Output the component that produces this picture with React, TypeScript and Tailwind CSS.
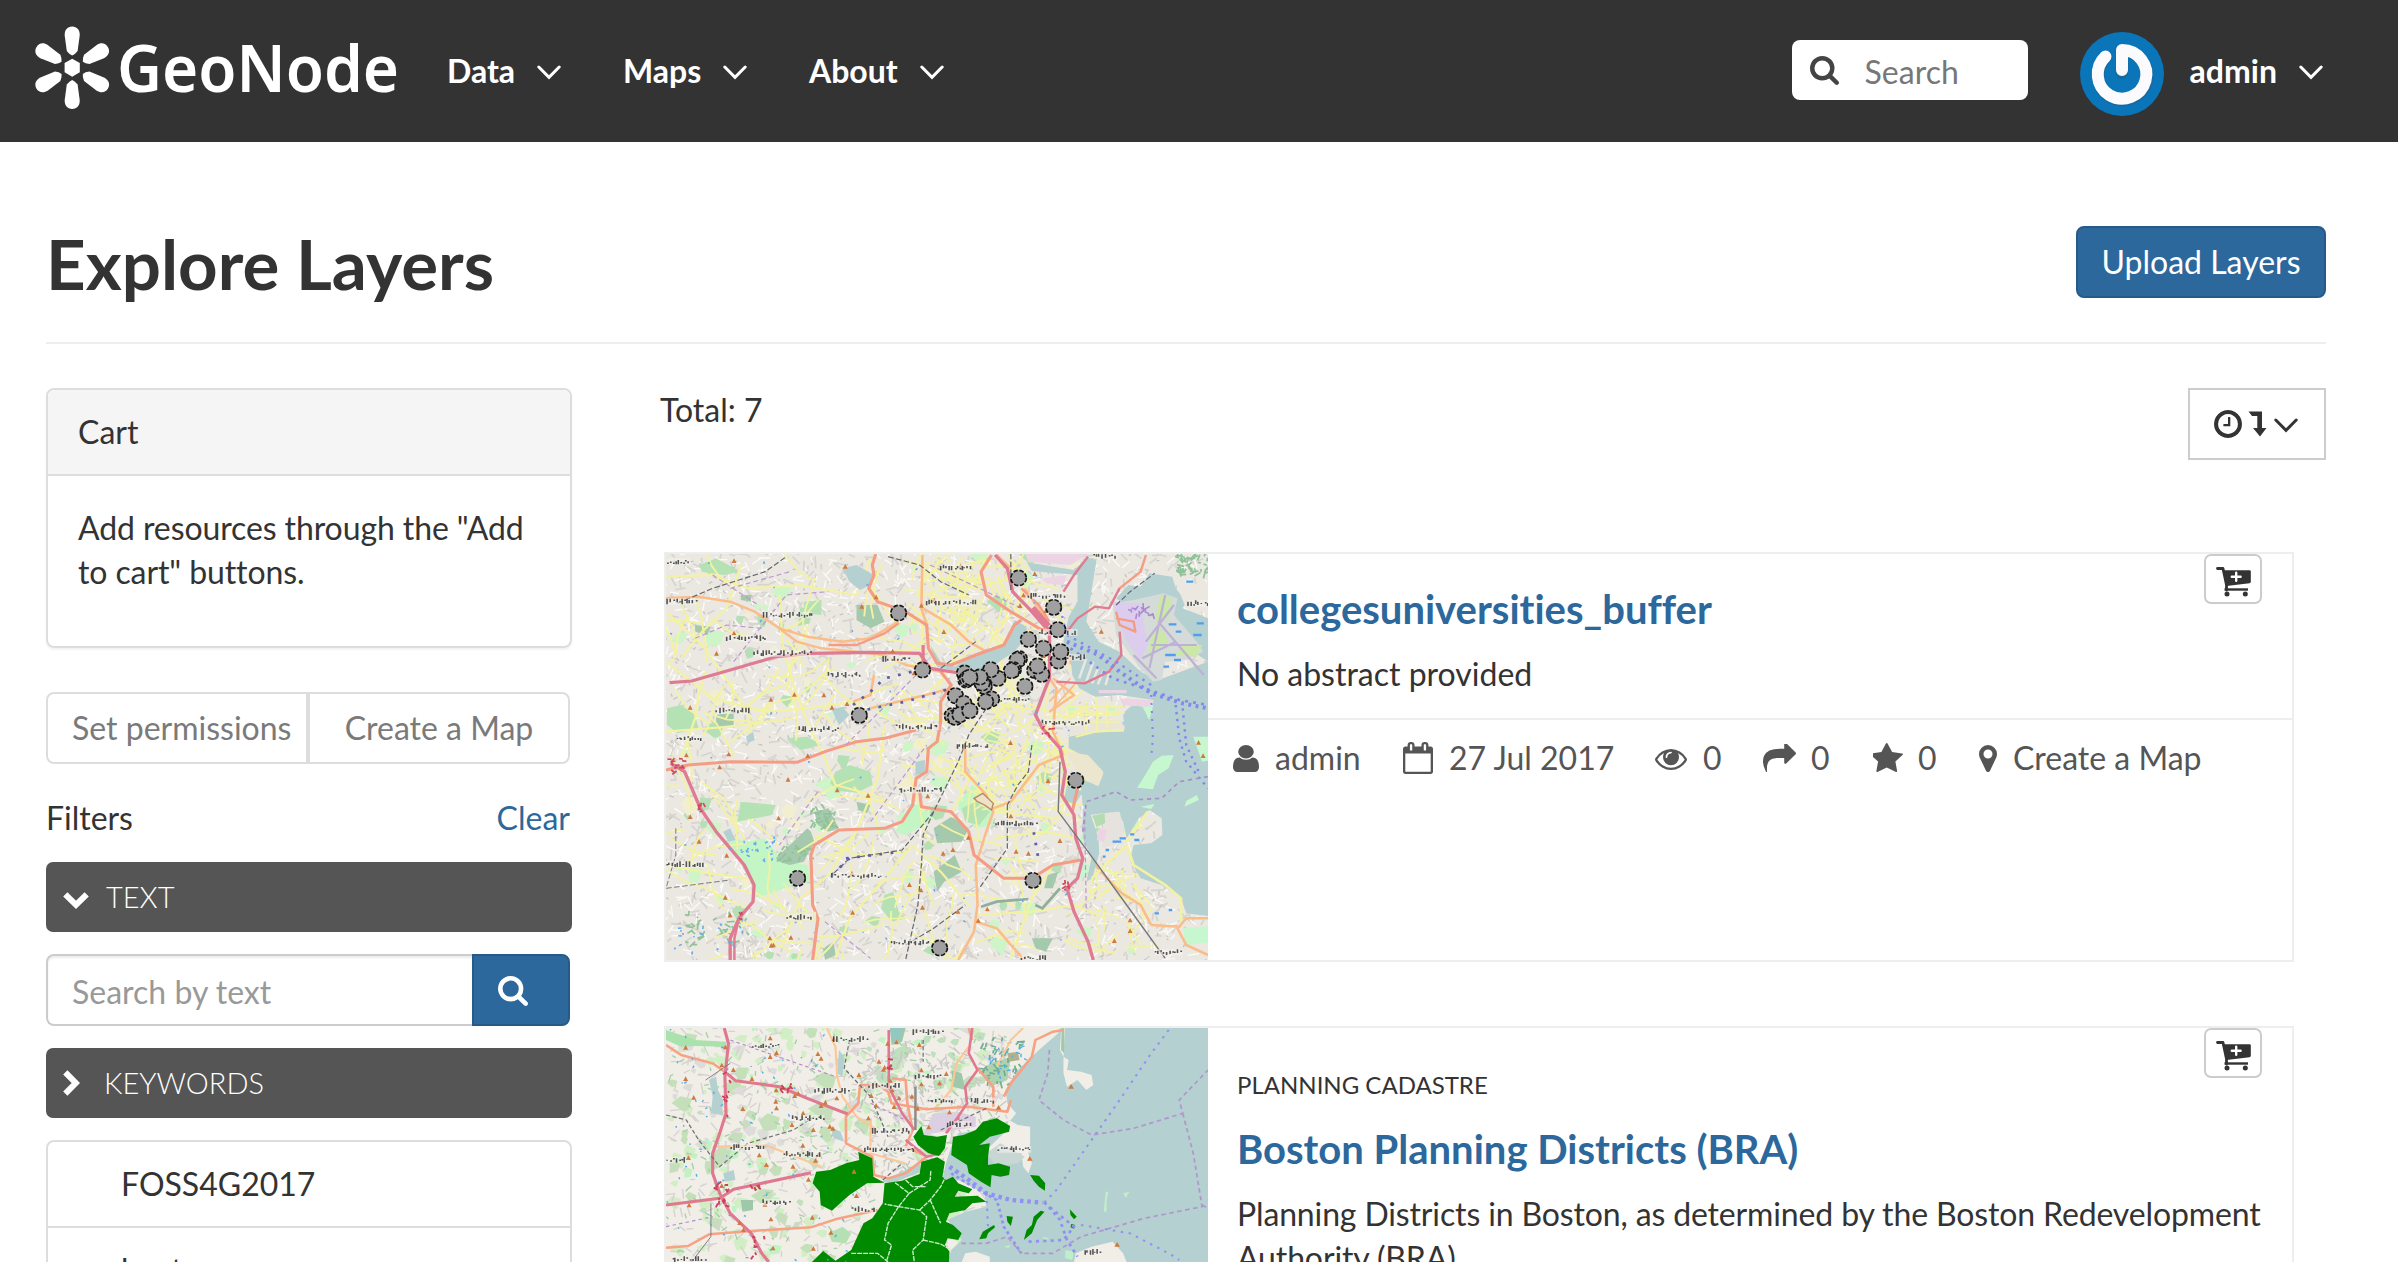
import React from "react";

const FA: Record<string, string> = {
  star: "M1664 615q0 22-26 48l-363 354 86 500q1 7 1 20 0 21-10.5 35.5t-30.5 14.5q-19 0-40-12l-449-236-449 236q-22 12-40 12-21 0-31.5-14.5t-10.5-35.5q0-6 2-20l86-500-364-354q-25-27-25-48 0-37 56-46l502-73 225-455q19-41 49-41t49 41l225 455 502 73q56 9 56 46z",
  share: "M1792 640q0 26-19 45l-512 512q-19 19-45 19t-45-19-19-45v-256h-224q-98 0-175.5 6t-154 21.5-133 42.5-105.5 69.5-80 101-48.5 138.5-17.5 181q0 55 5 123 0 6 2.5 23.5t2.5 26.5q0 15-8.5 25t-23.5 10q-16 0-28-17-7-9-13-22t-13.5-30-10.5-24q-127-285-127-451 0-199 53-333 162-403 875-403h224v-256q0-26 19-45t45-19 45 19l512 512q19 19 19 45z",
  eye: "M1664 960q-152-236-381-353 61 104 61 225 0 185-131.5 316.5t-316.5 131.5-316.5-131.5-131.5-316.5q0-121 61-225-229 117-381 353 133 205 333.5 326.5t434.5 121.5 434.5-121.5 333.5-326.5zm-720-384q0-20-14-34t-34-14q-125 0-214.5 89.5t-89.5 214.5q0 20 14 34t34 14 34-14 14-34q0-86 61-147t147-61q20 0 34-14t14-34zm848 384q0 34-20 69-140 230-376.5 368.5t-499.5 138.5-499.5-139-376.5-368q-20-35-20-69t20-69q140-229 376.5-368t499.5-139 499.5 139 376.5 368q20 35 20 69z",
  marker: "M1152 640q0-106-75-181t-181-75-181 75-75 181 75 181 181 75 181-75 75-181zm256 0q0 109-33 179l-364 774q-16 33-47.5 52t-67.5 19-67.5-19-46.5-52l-365-774q-33-70-33-179 0-212 150-362t362-150 362 150 150 362z",
  user: "M1536 1399q0 109-62.5 187t-150.5 78h-854q-88 0-150.5-78t-62.5-187q0-85 8.5-160.5t31.5-152 58.5-131 94-89 134.5-34.5q131 128 313 128t313-128q76 0 134.5 34.5t94 89 58.5 131 31.5 152 8.5 160.5zm-256-887q0 159-112.5 271.5t-271.5 112.5-271.5-112.5-112.5-271.5 112.5-271.5 271.5-112.5 271.5 112.5 112.5 271.5z",
  calendar: "M192 1664h1408v-1024h-1408v1024zm384-1216v-288q0-14-9-23t-23-9h-64q-14 0-23 9t-9 23v288q0 14 9 23t23 9h64q14 0 23-9t9-23zm768 0v-288q0-14-9-23t-23-9h-64q-14 0-23 9t-9 23v288q0 14 9 23t23 9h64q14 0 23-9t9-23zm384-64v1280q0 52-38 90t-90 38h-1408q-52 0-90-38t-38-90v-1280q0-52 38-90t90-38h128v-96q0-66 47-113t113-47h64q66 0 113 47t47 113v96h384v-96q0-66 47-113t113-47h64q66 0 113 47t47 113v96h128q52 0 90 38t38 90z",
  search: "M1216 832q0-185-131.5-316.5t-316.5-131.5-316.5 131.5-131.5 316.5 131.5 316.5 316.5 131.5 316.5-131.5 131.5-316.5zm512 832q0 52-38 90t-90 38q-54 0-90-38l-343-342q-179 124-399 124-143 0-273.5-55.5t-225-150-150-225-55.5-273.5 55.5-273.5 150-225 225-150 273.5-55.5 273.5 55.5 225 150 150 225 55.5 273.5q0 220-124 399l343 343q37 37 37 90z",
  clock: "M1024 544v448q0 14-9 23t-23 9h-320q-14 0-23-9t-9-23v-64q0-14 9-23t23-9h224v-352q0-14 9-23t23-9h64q14 0 23 9t9 23zm416 352q0-148-73-273t-198-198-273-73-273 73-198 198-73 273 73 273 198 198 273 73 273-73 198-198 73-273zm224 0q0 209-103 385.5t-279.5 279.5-385.5 103-385.5-103-279.5-279.5-103-385.5 103-385.5 279.5-279.5 385.5-103 385.5 103 279.5 279.5 103 385.5z",
};

/* viewBox is the tight box of each glyph, so width and height are ink sizes */
function Icon({ name, box, className }: { name: string; box: string; className: string }) {
  return (
    <svg viewBox={box} preserveAspectRatio="none" fill="currentColor" className={"shrink-0 " + className}>
      <path d={FA[name]} />
    </svg>
  );
}

function Angle({ className = "" }: { className?: string }) {
  return (
    <svg viewBox="0 0 24 15" fill="none" stroke="currentColor" strokeWidth="3" strokeLinecap="round" strokeLinejoin="miter" className={"h-[15px] w-[24px] shrink-0 " + className}>
      <path d="M1.8 2 12 12.3 22.2 2" />
    </svg>
  );
}

function Logo() {
  return (
    <svg viewBox="0 0 380 90" className="h-[90px] w-[380px] shrink-0 overflow-visible" fill="#fff">
      <g transform="translate(-30 -24)">
        {[0, 60, 120, 180, 240, 300].map((a) => (
          <path key={a} transform={`rotate(${a} 72.2 67.8)`} d="M72.200 26.500C77 26.500 80 30 79.700 35.500L77.600 51Q75 54.500 72.200 55.500Q69.400 54.500 66.800 51L64.700 35.500C64.400 30 67.400 26.500 72.200 26.500Z" />
        ))}
        <path d="M72.200 58.700L79.800 63V72.300L72.200 76.800 64.600 72.300V63Z" />
        <text x="117" y="91.500" fontFamily="'Noto Sans','Open Sans',sans-serif" fontWeight="600" fontSize="65" textLength="282" lengthAdjust="spacingAndGlyphs">GeoNode</text>
      </g>
    </svg>
  );
}

function Cart() {
  return (
    <svg viewBox="0 0 35 30" className="h-[30px] w-[35px]">
      <path d="M1.500 1.500H7L10.500 18V23" fill="none" stroke="#333" strokeWidth="2.800" strokeLinecap="round" strokeLinejoin="round" />
      <path d="M6.500 3.200H33.500Q34.800 3.200 34.800 4.500V14.500Q34.800 16 33.500 16.200L10.500 19Z" fill="#333" />
      <path d="M8.500 21.300H32V23.700H8.500Z" fill="#333" />
      <circle cx="11" cy="27" r="2.500" fill="#333" />
      <circle cx="29.300" cy="27" r="2.500" fill="#333" />
      <path d="M20.200 5.800V13.800M15.800 9.800H24.600" stroke="#fff" strokeWidth="2.400" strokeLinecap="round" />
    </svg>
  );
}

function rng(seed: number) {
  let s = seed;
  return () => {
    s = (s * 1664525 + 1013904223) % 4294967296;
    return s / 4294967296;
  };
}

/* a set of short segments scattered over an area, as one path */
function scatter(seed: number, n: number, x0: number, y0: number, x1: number, y1: number, len: number, bend = 0) {
  const r = rng(seed);
  let d = "";
  for (let i = 0; i < n; i++) {
    let x = x0 + r() * (x1 - x0);
    let y = y0 + r() * (y1 - y0);
    let a = r() * Math.PI * 2;
    d += `M${x.toFixed(0)} ${y.toFixed(0)}`;
    const steps = bend ? 4 : 1;
    for (let k = 0; k < steps; k++) {
      const l = (len * (0.5 + r())) / steps;
      x += Math.cos(a) * l;
      y += Math.sin(a) * l;
      a += (r() - 0.5) * bend;
      d += `L${x.toFixed(0)} ${y.toFixed(0)}`;
    }
  }
  return d;
}

function triangles(seed: number, n: number, x0: number, y0: number, x1: number, y1: number) {
  const r = rng(seed);
  let d = "";
  for (let i = 0; i < n; i++) {
    const x = x0 + r() * (x1 - x0);
    const y = y0 + r() * (y1 - y0);
    d += `M${x.toFixed(0)} ${y.toFixed(0)}l7 14h-14z`;
  }
  return d;
}

function blobs(seed: number, n: number, x0: number, y0: number, x1: number, y1: number, size: number) {
  const r = rng(seed);
  let d = "";
  for (let i = 0; i < n; i++) {
    const x = x0 + r() * (x1 - x0);
    const y = y0 + r() * (y1 - y0);
    const s = size * (0.4 + r());
    d += `M${x.toFixed(0)} ${y.toFixed(0)}l${(s * r()).toFixed(0)} ${(-s * 0.6).toFixed(0)} ${s.toFixed(0)} ${(s * 0.5 * r()).toFixed(0)} ${(-s * 0.3).toFixed(0)} ${s.toFixed(0)} ${(-s * r()).toFixed(0)} ${(s * 0.2).toFixed(0)}z`;
  }
  return d;
}

/* town names, reduced to the dark specks they are at this zoom */
function Specks({ at }: { at: number[][] }) {
  return (
    <g fill="none">
      {at.map(([x, y, w], i) => {
        const r = rng(i * 977 + 13);
        for (let k = 0; k < 4; k++) r();
        let d = "";
        for (let p = x; p < x + w; p += 5 + r() * 6) {
          const top = y - 9 + Math.floor(r() * 3) * 4;
          d += r() > 0.35 ? `M${p.toFixed(0)} ${top}V${y + 8 - Math.floor(r() * 3) * 3}` : `M${p.toFixed(0)} ${y - 4 + Math.floor(r() * 10)}h5`;
        }
        return (
          <g key={i}>
            <path d={`M${x} ${y}h${w}`} stroke="#f4f2ec" strokeOpacity=".6" strokeWidth="20" />
            <path d={d} stroke="#2c2c2c" strokeWidth="4.5" opacity=".8" />
          </g>
        );
      })}
    </g>
  );
}

const COLLEGES = [
  [1022, 99], [1122, 187], [1134, 254], [680, 204], [1050, 283], [1093, 310], [1135, 348], [1142, 320],
  [1024, 341], [1018, 345], [1068, 376], [1088, 388], [1076, 363], [1040, 424], [1007, 374], [1002, 377], [963, 400],
  [943, 374], [924, 424], [918, 414], [868, 384], [912, 396], [872, 405], [876, 401], [883, 397], [748, 375], [842, 452], [866, 475],
  [945, 462], [928, 470], [833, 512], [842, 517], [855, 509], [883, 497], [568, 511], [1185, 706], [392, 1000], [1063, 1006], [797, 1209],
];

function CollegesMap() {
  return (
    <svg viewBox="17 27 1545 1218" preserveAspectRatio="none" className="block h-[406px] w-[542px]">
      <filter id="raster" x="0" y="0" width="100%" height="100%">
        <feGaussianBlur stdDeviation="1.8" />
      </filter>
      <g filter="url(#raster)">
        <rect x="0" y="0" width="1600" height="1280" fill="#ebe8e1" />
        <g fill="none">
          <path d={scatter(3, 1500, 17, 27, 1562, 1245, 26)} stroke="#d6d4d0" strokeWidth="5" />
          <path d={scatter(9, 1500, 17, 27, 1562, 1245, 24)} stroke="#fbfaf8" strokeWidth="4" />
          <path d={scatter(19, 700, 17, 27, 1562, 1245, 9)} stroke="#c8c5c2" strokeWidth="4" />
        </g>
        <path d={blobs(41, 60, 17, 27, 1400, 1245, 26)} fill="#cdf5c8" />
        <path d={blobs(45, 34, 17, 27, 1300, 1245, 26)} fill="#b5dfb5" />
        <path d={blobs(48, 20, 17, 27, 1300, 1245, 30)} fill="#f1efd0" />
        <g fill="#c4f5c4">
          <path d="M180 860L240 890 300 880 350 950 420 960 430 1010 380 1020 330 1040 270 1060 250 980 200 900Z" />
          <path d="M720 770L760 800 770 830 700 870 670 860 690 820Z" />
          <path d="M860 760L890 720 940 760 950 840 900 850 850 790Z" />
        </g>
        <g fill="#b4e2b4">
          <path d="M500 680L540 660 600 680 606 720 560 743 510 738 485 715Z" />
          <path d="M20 490L60 480 100 510 110 550 50 565 20 540Z" />
          <path d="M110 60L160 40 230 80 180 90 120 80Z" />
          <path d="M640 1050L665 1040 680 1100 700 1120 660 1130 630 1090Z" />
          <path d="M230 770L330 780 320 810 220 830Z" />
          <path d="M410 170L460 165 460 210 410 205Z" />
          <path d="M860 790L900 770 940 800 910 840 870 830Z" />
          <path d="M360 580L420 575 460 600 400 615Z" />
        </g>
        <g fill="#a5c9ad">
          <path d="M560 180L620 180 640 230 600 250 560 225Z" />
          <path d="M330 940L420 850 430 860 440 890 410 950 370 960 340 950Z" />
          <path d="M440 800L480 790 510 850 480 860 450 840Z" />
          <path d="M780 850L830 815 880 850 860 890 790 895Z" />
          <path d="M780 980L840 930 860 980 810 1010 790 1040Z" />
          <path d="M160 510L210 500 210 540 160 545Z" />
          <path d="M1060 1180L1120 1180 1100 1220 1070 1210Z" />
          <path d="M1105 990L1135 980 1120 1030 1095 1030Z" />
          <path d="M230 150l30 0 0 20-30-5zM100 240l45 5-10 25-35-10zM560 770l40 10-10 25-25-10zM465 1210l30-20 5 40-30 15z" />
        </g>
        <path d={scatter(77, 34, 430, 790, 500, 850, 12) + scatter(71, 34, 70, 1110, 250, 1200, 16) + scatter(72, 24, 340, 910, 430, 950, 12) + scatter(73, 50, 1470, 30, 1562, 90, 16)} stroke="#8fc298" strokeWidth="5" fill="none" />
        {/* yellow secondary streets */}
        <g fill="none" stroke="#f3f2a2" strokeWidth="6.500" strokeLinejoin="round">
          <path d={scatter(5, 150, 17, 27, 1250, 1245, 150, 0.7)} strokeWidth="5.500" />
          <path d={scatter(12, 90, 860, 460, 1150, 800, 90, 0.3)} strokeWidth="5" />
          <path d={scatter(15, 70, 760, 40, 1080, 300, 90, 0.3)} strokeWidth="5" />
          <path d={scatter(16, 26, 1220, 950, 1400, 1240, 90, 0.3)} strokeWidth="5" />
          <path d="M17 200L120 300 200 420 260 520 M17 350L150 460 300 500 420 490 560 470 M17 560L200 545 380 520 M130 380L110 450 100 520 60 640 M600 40L560 150 400 120 250 130 150 90 17 95 M340 150L350 300 380 420 420 530 470 640 500 720 640 760 M230 60L190 190 120 260 60 340" />
          <path d="M620 500L680 540 760 530 M640 540L620 700 560 860 480 990 400 1060 350 1200 M17 960L140 985 250 1000 M440 870L560 930 700 920 M500 1240L540 1120 640 1000 720 900 M720 900L800 980 880 1080 M950 800L1130 820 M950 880L1100 860 1180 880 M930 700L950 780 M1000 1240L1060 1060 1120 960 M900 1110L1060 1100 1180 1080 1270 1120" />
          <path d="M1160 360L1240 440 1250 540M1160 485L1320 485M1160 510L1310 510M1200 500V570" />
        </g>
        {/* orange primary roads */}
        <g fill="none" stroke="#fbbd88" strokeWidth="7.500" strokeLinejoin="round">
          <path d="M17 160L110 155 200 170 270 200 340 250 420 275 520 290 600 280 680 230" />
          <path d="M340 250L390 290 460 310 560 320 640 330 700 360 800 380" />
          <path d="M748 30L745 190 760 240M750 190L830 240 880 290 930 320M600 490L720 460 830 430M870 600L870 680 930 750 950 800 930 860 900 960 905 1080 895 1160 850 1245" />
          <path d="M950 790L1000 770 1080 660 1150 630M1110 400L1130 430 1120 560 1150 630M1150 300L1180 370 1250 420" />
          <path d="M900 1130L960 1150 1000 1200 1040 1245M1240 960L1310 1040 1370 1080 1400 1140" />
          <path d="M960 30L1000 70M1040 130L1110 240M1120 400L1180 450 1110 500M610 390L600 450 550 470" />
          <path d="M1110 470L1170 400M1120 490L1185 415" strokeWidth="5" />
        </g>
        {/* water */}
        <g fill="#b5d0d0">
          <path d="M1300 160L1335 120 1370 125 1395 85 1460 95 1470 130 1500 170 1490 190 1600 235V1118L1500 1105 1485 1060 1430 1020 1370 1000 1340 945 1350 900 1400 895 1432 870 1430 820 1395 795 1365 820 1330 880 1320 830 1300 800 1260 805 1225 810 1205 780 1200 730 1195 700 1250 722 1264 685 1220 640 1165 610 1165 575 1240 560 1322 530 1320 510 1345 482 1405 485 1405 465 1310 450 1240 455 1195 430 1175 390 1170 330 1150 290 1165 215 1190 170 1190 90 1060 78 1045 52 1180 75 1215 40 1245 40 1222 190 1215 230 1250 290 1310 320 1370 380 1420 405 1562 350Z" />
          <path d="M770 300L800 350 840 365 900 325 985 295 1010 225 1045 245 1045 275 1010 320 930 375 830 375 790 365Z" />
          <path d="M520 70L560 60 610 90 600 120 570 135 540 110Z" />
          <path d="M490 495L520 485 540 510 510 540Z M728 650L755 645 755 685 728 690Z M180 860L200 850 215 885 195 890Z M245 575l20-15 5 25-20 10z" />
          <path d="M1205 790L1225 800 1250 880 1252 925 1232 1000 1215 1010 1230 940 1205 880Z M1160 720L1205 740 1185 775 1150 770Z" />
        </g>
        <path d="M1540 110L1480 140 1500 190 1562 205V110Z" fill="#ece8e0" />
        {/* airport */}
        <path d="M1290 175L1350 165 1435 145 1475 160 1465 210 1530 290 1548 320 1500 345 1440 350 1430 405 1405 410 1365 365 1300 270Z" fill="#d4dbd8" />
        <path d="M1290 170L1370 175 1390 300 1370 345 1330 290Z" fill="#dccdef" />
        <g fill="#cbe8a8"><path d="M1425 150l35 10-10 60-40 10zM1400 270l30-20 20 40-60 50zM1490 300l55 0-15 35-60-5z" /></g>
        <path d="M1440 150L1395 370M1465 180L1385 290M1400 300L1530 300M1420 230L1550 390M1375 340L1470 290M1350 330L1415 400" fill="none" stroke="#bdb2d6" strokeWidth="6.500" />
        <path d={scatter(81, 16, 1340, 190, 1410, 215, 14)} stroke="#a98ad0" strokeWidth="4.500" fill="none" />
        {/* islands and piers */}
        <g fill="#c6f7cf">
          <path d="M1405 650L1430 632 1464 630 1450 670 1420 690 1405 733 1360 728 1380 695Z M1530 750L1536 765 1495 785 1500 768Z M1520 575L1600 575V640L1545 650Z M1370 483L1405 485 1395 525Z M1185 1010L1205 950 1225 960 1215 990Z M1370 785l40-8-10 15z" />
          <path d="M1490 1150L1600 1140V1190L1500 1200Z" />
        </g>
        <path d="M1325 500L1340 485 1375 485 1388 510 1380 540 1350 552 1330 540Z" fill="#b5d0d0" />
        <path d="M1322 560L1325 545 1310 525 1160 520V570L1240 562Z" fill="#e9e5da" />
        <path d="M1160 620L1220 630 1264 680 1245 722 1190 690Z" fill="#ece6cf" />
        <path d="M1265 805L1310 800 1325 860 1300 900 1260 910Z" fill="#e6e3de" />
        <path d="M1232 812l35-8 2 30-25 12z" fill="#b4dcb0" />
        <g fill="#ecd4e4"><path d="M1040 27L1220 27 1170 60 1050 50ZM1090 100L1160 90 1150 120 1100 115ZM1310 460L1410 465 1390 485 1320 480ZM1250 435L1330 435 1330 445 1250 445ZM1250 850l25 5-10 35-20-5z" /></g>
        <path d="M1215 340L1195 400M1235 350L1215 410M1250 365L1232 415M1265 375L1248 418M1280 385L1270 420" stroke="#ebe8e1" strokeWidth="7" />
        <path d="M1215 470V560M1245 470V560M1275 470V550M1160 500H1320M1160 530H1310M1185 575L1240 560 1320 555" stroke="#f3f2a2" strokeWidth="6" fill="none" />
        <path d="M1230 1000L1330 900 1350 960 1440 1020 1485 1060V1130M1330 890L1390 800" stroke="#f3f2a2" strokeWidth="8" fill="none" />
        <path d="M1400 1140L1480 1145 1500 1120 1600 1120M1470 1140L1500 1200 1562 1230" stroke="#fbbd88" strokeWidth="7.500" fill="none" />
        {/* trunk roads */}
        <g fill="none" stroke="#f49d84" strokeWidth="9" strokeLinejoin="round">
          <path d="M17 675L80 660 200 650 390 652 470 620 560 590 640 580 730 555" />
          <path d="M615 27L605 60 610 90 595 130 620 170 700 200 760 240 765 310 790 355 830 360 900 330 980 300 1010 240 1030 225" />
          <path d="M945 30L915 80 930 150 1000 200 1080 250 1110 260" />
          <path d="M680 235L640 265 560 300 480 300" strokeWidth="7" />
          <path d="M800 380L830 420 800 470 800 530 790 590 765 610 760 680 730 700 720 780 690 830 640 850 510 855 440 900 430 930 435 1080 450 1120 435 1245" />
          <path d="M740 740L745 785 830 800 880 860 895 930 980 1000 1060 1000 1120 960 1200 945M1190 730L1175 800" />
          <path d="M1030 130L1080 180 1110 230M1385 30L1370 80 1310 130M1300 200L1310 240 1355 260 1350 230 1300 220" strokeWidth="7" />
        </g>
        {/* motorways */}
        <g fill="none" stroke="#df7b93" strokeWidth="9.500" strokeLinejoin="round">
          <path d="M27 413L90 408 200 375 330 335 430 325 600 322 740 325 770 370 860 385" />
          <path d="M30 655L70 680 115 790 160 860 240 960 268 1020 265 1070 225 1120 200 1180 200 1245" />
          <path d="M225 1120L212 1180 212 1245" strokeWidth="7" />
          <path d="M955 30L990 70 1005 140 1060 200 1110 255 1110 300 1110 400 1095 440 1070 510 1090 550 1140 610 1155 680 1145 750 1180 810 1185 880 1205 940 1190 1000 1160 1030 1180 1100 1220 1190 1235 1245" />
          <path d="M1060 190L1105 245" strokeWidth="22" />
          <path d="M1220 35L1180 90 1150 140M1160 260L1190 220 1240 185 1280 190 1310 130M1310 260L1315 330 1280 380 1210 415 1130 410" strokeWidth="7" />
          <path d="M750 300L750 355" strokeWidth="9" />
        </g>
        <path d={scatter(91, 14, 30, 640, 70, 690, 12) + scatter(92, 8, 105, 770, 125, 800, 9) + scatter(93, 8, 1085, 530, 1115, 580, 9) + scatter(94, 8, 1148, 1012, 1168, 1036, 10) + scatter(95, 4, 222, 1105, 236, 1125, 8)} stroke="#cf4a60" strokeWidth="5" fill="none" />
        {/* railways */}
        <g fill="none" stroke="#66666e" strokeWidth="3.500" strokeDasharray="16 7">
          <path d="M50 175L150 130 300 80 360 35" />
          <path d="M930 490L880 570 850 650 780 800 750 870 745 960 735 1080 700 1245" />
          <path d="M780 800L690 915 540 940 490 990M700 1200L780 1150 870 1080M1000 27V140M990 780V910L910 1030" />
          <path d="M1060 600L1050 680 1020 720 990 780" />
          <path d="M1140 650L1135 800 1220 920 1330 1080 1440 1240" stroke="#77777a" strokeDasharray="none" strokeWidth="4" />
          <path d="M1300 180L1340 140 1410 85M650 35L740 60 800 110 880 150M800 370L900 290" />
          <path d="M45 850V930L17 1030 200 1005" strokeWidth="2.500" />
        </g>
        <path d="M915 1085L960 1070 1050 1062M1070 1080L1090 1090 1140 1030" fill="none" stroke="#8fae9c" strokeWidth="8" />
        <g fill="none" stroke="#5e5ea8" strokeWidth="8" strokeDasharray="8 24">
          <path d="M560 500L700 470 830 430M550 480L600 440 640 400 740 375M530 940L690 920M490 990L540 940M1060 830L1080 950" />
        </g>
        <g fill="none" stroke="#bb96d2" strokeWidth="3.500" strokeDasharray="14 9">
          <path d="M150 90L280 180 M200 130L370 80M210 350L360 150 480 140M530 600L740 380M450 740L340 900M600 830L760 600M470 1130L600 1240M1210 800L1215 1100M770 60L1030 190M100 280L190 240 290 250" />
        </g>
        {/* ferry lines */}
        <g fill="none" stroke="#8586f0">
          <path d="M1160 290L1250 330 1310 380 1400 445 1490 475 1562 490" strokeWidth="12" strokeDasharray="8 13" />
          <path d="M1170 310L1290 400 1380 430 1480 465 1562 480" strokeWidth="8" strokeDasharray="8 15" />
          <path d="M1160 270L1300 350 1400 420" strokeWidth="7" strokeDasharray="7 16" />
          <path d="M1470 480L1480 580 1500 650 1562 730M1490 490L1500 600 1540 690" strokeWidth="7" strokeDasharray="7 14" />
          <path d="M1400 450L1405 580 1400 640M1140 190L1160 270" strokeWidth="6" strokeDasharray="6 18" />
        </g>
        <path d="M1205 860L1215 770 1300 740 1340 765 1430 760 1480 710 1562 695" fill="none" stroke="#a98fc8" strokeWidth="5" strokeDasharray="12 11" />
        <path d={scatter(61, 24, 230, 870, 330, 950, 7) + scatter(62, 18, 40, 1120, 240, 1230, 7) + scatter(64, 50, 17, 27, 1200, 1245, 6)} stroke="#62aaf0" strokeWidth="4.500" fill="none" />
        <path d="M1450 238h22M1470 260h16M1500 110h20M1520 270h24M1440 330h30M1465 345h20M1435 365h16M1290 890h24M1310 880h18M1340 868h12M1352 885h14M1270 915h10M1262 935h8M1530 235h20M1410 1105h12M1450 1095h10" stroke="#4e9fec" strokeWidth="7" fill="none" />
        <path d="M895 760L920 745 950 775 945 795 925 780 905 770Z" fill="#efe0c8" stroke="#b98a5c" strokeWidth="4" />
        <path d="M355 1100h90v30h-90z" fill="#ebeac6" />
        <path d={triangles(52, 58, 30, 40, 1150, 1200) + "M1258 252l7 14h-14zM1140 880l7 14h-14zM1340 1150l7 14h-14zM1295 1180l7 14h-14zM1535 585l7 14h-14zM1548 625l7 14h-14zM1340 1118l7 14h-14z"} fill="#cf7a3c" />
        <Specks at={[[20, 50, 66], [20, 170, 82], [295, 210, 140], [190, 280, 115], [268, 325, 160], [160, 497, 96], [50, 580, 70], [397, 553, 112], [480, 390, 92], [636, 342, 76], [760, 173, 140], [800, 68, 88], [1050, 153, 108], [1080, 262, 110], [1150, 337, 64], [970, 465, 82], [1090, 533, 136], [672, 545, 124], [848, 603, 88], [682, 735, 124], [958, 836, 116], [18, 958, 110], [490, 993, 146], [360, 1116, 76], [660, 1193, 110], [1235, 33, 70], [1505, 175, 57], [1410, 1222, 80], [1030, 1240, 70]]} />
      </g>
      <g fill="#a0a0a0" stroke="#151515" strokeWidth="5" strokeDasharray="13 5">
        {COLLEGES.map(([x, y], i) => (
          <ellipse key={i} cx={x} cy={y} rx="22" ry="23" />
        ))}
      </g>
    </svg>
  );
}

function DistrictsMap() {
  return (
    <svg viewBox="17 24 1545 1218" preserveAspectRatio="none" className="block h-[406px] w-[542px]">
      <g filter="url(#raster)">
        <rect x="0" y="0" width="1600" height="1280" fill="#f1eee8" />
        <path d={blobs(141, 170, 17, 24, 900, 726, 20)} fill="#d2eec4" />
        <path d={blobs(143, 60, 17, 24, 560, 726, 26)} fill="#c4e0b8" />
        <path d={blobs(144, 60, 17, 24, 1000, 400, 18)} fill="#dedcdb" />
        <path d={blobs(146, 26, 560, 30, 900, 200, 26)} fill="#bfe0bd" />
        <path d={blobs(147, 30, 17, 24, 900, 700, 16)} fill="#c1f2c1" />
        <g fill="none">
          <path d={scatter(103, 520, 17, 24, 1000, 726, 24)} stroke="#d5d2d0" strokeWidth="4" />
          <path d={scatter(109, 260, 560, 80, 1000, 460, 18)} stroke="#c9c6c6" strokeWidth="4" />
          <path d={scatter(110, 200, 17, 24, 1000, 700, 14)} stroke="#a6cfa9" strokeWidth="4" />
        </g>
        <path d="M17 30L60 45 100 60 190 65 185 80 100 78 60 80 17 60Z" fill="#a9e2ac" />
        <path d="M480 640L520 620 545 640 530 670 490 665Z" fill="#b4e0b4" />
        <path d="M655 24L700 24 690 65 660 75Z M830 150l30 10 10 50-35-10z M230 540l35 0 0 30-30 5z" fill="#9fc8ab" />
        <path d="M940 130L1000 110 990 180 940 200 920 150Z" fill="#add2b0" />
        <path d={scatter(111, 50, 920, 60, 1040, 190, 16)} stroke="#6fae93" strokeWidth="5" fill="none" />
        {/* water */}
        <g fill="#b5d0d0">
          <path d="M1135 40L1150 0H1600V760H810L830 690 860 660 820 600 870 575 930 560 925 520 850 480 800 500 815 430 830 380 850 340 920 330 1000 300 1015 280 990 250 985 210 1020 150 1080 90Z" />
          <path d="M140 180L160 170 165 210 180 240 175 285 145 280 150 230Z M510 90L525 110 520 170 505 160Z M485 320l30 15 10 30-30-10z M180 460l30-10 5 30-30 5z" />
          <path d="M630 485L740 430 745 455 660 490Z" />
        </g>
        <path d="M655 24L690 24 685 60 665 65Z" fill="#92c8c0" />
        <g fill="#f1eee8">
          <path d="M1145 0H1155L1150 110 1140 90Z M1150 110L1165 120 1160 150 1200 155 1230 165 1235 195 1215 210 1190 180 1160 200 1150 160Z" />
          <path d="M995 300L1020 315 1055 320 1055 370 1050 400 1060 430 1050 460 1035 440 1030 400 960 400 930 390 980 340Z" />
          <path d="M1185 700L1230 680 1290 665 1320 700 1330 726H1180Z M860 726L870 700 900 695 940 710 940 726Z" />
        </g>
        <path d="M1145 24H1152V100L1143 90Z" fill="#a3c9a2" />
        <path d="M930 400L970 370 1040 410 1020 430 960 440Z" fill="#c8d6d4" />
        <path d="M780 280L850 275 900 290 900 320 840 330 750 345Z" fill="#dccfe2" />
        <path d="M990 100l30-5 5 25-30 5z" fill="#b5b08c" />
        <path d="M1270 515l8 0-5 30 0 30-8 0zM1320 520l18-5-10 18zM1090 650l18 5-10 8zM980 680l18-6-4 10zM1155 690l25 5-5 25-20-5z" fill="#c0eec8" />
        {/* orange roads */}
        <g fill="none" stroke="#fcc794" strokeWidth="6">
          <path d="M475 24L500 80 505 170 520 230 560 290 620 330M150 380L300 375 460 440M880 80L845 130 830 210 780 270M1035 24L1000 60 960 140" />
          <path d="M600 300L600 400 700 430" />
        </g>
        <g fill="none" stroke="#f6a283" strokeWidth="7.500" strokeLinejoin="round">
          <path d="M17 75L60 105 150 130 190 160" />
          <path d="M17 683L80 678 140 643 260 633 430 622 500 598 620 570" />
          <path d="M570 195L565 250 530 290 530 370 605 410 610 465 650 475 700 460 760 410" />
          <path d="M570 195H620L650 215 660 250 760 268 880 260 990 275 1000 240" />
          <path d="M1150 30L1120 35 1070 60 1060 110 1000 190 980 230M905 145L950 200 950 260M880 24L890 60" />
          <path d="M660 175L700 180 705 250 720 330 700 380 750 405" />
        </g>
        {/* motorways */}
        <g fill="none" stroke="#e0788f" strokeWidth="9" strokeLinejoin="round">
          <path d="M183 24L195 70 185 170 188 280 170 340 150 400 150 460 170 520 200 580 260 640 290 700 310 726" />
          <path d="M190 160L215 182 340 200 420 235 480 260 535 282" />
          <path d="M17 555L170 535 210 508 430 458" />
          <path d="M652 30V200L690 280 725 330M890 24L880 100 905 150 870 200 875 250 850 290 850 300M700 360L760 410 800 400M815 340L850 290" strokeWidth="7.500" />
        </g>
        <path d={scatter(191, 8, 180, 150, 200, 290, 9) + scatter(192, 14, 160, 490, 190, 565, 10) + scatter(193, 10, 325, 193, 378, 212, 10) + scatter(194, 6, 255, 490, 285, 508, 10) + scatter(195, 8, 250, 625, 300, 710, 9) + scatter(196, 5, 646, 115, 658, 145, 10)} stroke="#cb4259" strokeWidth="5.500" fill="none" />
        <g fill="none" stroke="#6f6f74" strokeWidth="3.500" strokeDasharray="12 7">
          <path d="M17 285L75 300 110 360 170 440 250 370 380 330 440 290M540 60L525 145 600 230 650 350M750 60V125M635 480L690 430M800 330L930 265" />
          <path d="M145 550L145 650 90 726M130 180L200 130" strokeWidth="2.500" strokeDasharray="none" />
        </g>
        <path d="M728 200V330" stroke="#8b8b8b" strokeWidth="7" />
        <g fill="none" stroke="#b58bd0" strokeWidth="3.500" strokeDasharray="10 9">
          <path d="M17 620L150 590M200 60L500 170M600 250L700 300" />
        </g>
        {/* planning districts */}
        <g fill="#008a00">
          <path d="M565 395L605 415 608 470 640 488 590 490 540 525 515 548 490 572 458 555 455 515 435 490 445 455 485 450 530 430 568 420Z" />
          <path d="M640 490L690 482 740 462 745 425 790 412 812 425 805 470 815 480 835 470 850 490 890 508 880 520 850 512 840 530 905 527 930 545 890 550 870 570 825 580 815 605 835 615 860 640 850 660 820 655 812 675 825 695 822 760H400L465 693 500 722 545 690 580 610 605 595 635 550Z" />
          <path d="M722 350L745 318 752 345 790 350 818 345 812 385 795 408 765 400 735 375Z" />
          <path d="M835 350L865 345 900 330 920 305 960 295 998 318 995 335 960 345 940 350 910 375 940 370 935 410 935 435 965 430 998 440 995 465 970 470 945 465 942 502 915 485 880 460 875 435 830 405Z" />
          <path d="M1055 465L1080 467 1098 490 1097 512 1080 500 1065 482Z M952 615L955 622 935 640 930 655 910 658 920 635Z M988 588L1006 590 1000 618 990 605Z M1085 572L1096 575 1075 600 1060 640 1037 660 1045 630 1060 615 1065 590Z M1168 568L1188 590 1180 598 1170 585ZM1172 612l10 2-2 12-10-4z" />
        </g>
        <g fill="none" stroke="#c9ecc9" strokeWidth="4" strokeDasharray="14 3">
          <path d="M670 488L710 520 740 500 770 480 772 450M710 520L680 560 640 552M680 560L650 610 640 660 660 675 645 726M680 560L740 570 760 590 750 660 720 690 725 726M740 570L770 540 800 500 812 475M750 660L800 672 830 690M770 540L800 610M545 700L620 700 650 726M700 480L720 500H760" />
        </g>
        {/* ferry lines */}
        <g fill="none" stroke="#8f92f2">
          <path d="M825 440L880 480 930 520 1000 540 1090 548" strokeWidth="13" strokeDasharray="10 11" />
          <path d="M830 460L900 505 960 540 980 620 1030 700" strokeWidth="8" strokeDasharray="9 9" />
          <path d="M1095 545L1140 600 1160 660 1190 710M1095 548L1180 620 1150 660 1050 665" strokeWidth="8" strokeDasharray="9 12" />
          <path d="M1450 30L1400 100 1310 240 1130 510 1095 548M930 520L935 620M1200 615L1340 640 1450 700 1480 720" strokeWidth="6" strokeDasharray="7 16" />
        </g>
        <g fill="none" stroke="#b295cc" strokeWidth="5" strokeDasharray="13 10">
          <path d="M1110 90L1105 160 1080 240 1150 300 1230 345 1350 325 1490 280 1480 240 1562 150M1490 280L1520 400 1545 560 1380 595 1200 650 1120 700 1030 700 990 650 930 670 850 670M1545 555L1562 565" />
        </g>
        <path d={scatter(161, 70, 17, 24, 560, 726, 6) + scatter(162, 20, 940, 80, 1040, 180, 8)} stroke="#4eaee8" strokeWidth="4" fill="none" />
        <path d={triangles(152, 46, 30, 30, 560, 700) + triangles(155, 22, 560, 40, 830, 320) + "M965 255l8 14h-16zM1054 408l8 14h-16zM1172 192l8 14h-16zM1303 666l8 14h-16zM560 520l8 14h-16z"} fill="#cf7a3c" />
        <Specks at={[[262, 76, 76], [722, 37, 88], [495, 58, 100], [728, 170, 76], [442, 213, 96], [596, 198, 90], [766, 242, 70], [888, 243, 68], [378, 295, 90], [606, 333, 110], [820, 313, 66], [584, 388, 140], [203, 382, 96], [352, 402, 112], [20, 420, 54], [962, 388, 96], [294, 547, 76], [546, 568, 70], [1212, 696, 44], [36, 718, 96]]} />
      </g>
    </svg>
  );
}

const META = [
  { icon: "user", box: "256 128 1280 1536", size: "h-[27px] w-[26px]", label: "admin", cell: "w-[170px]", text: "ml-[16px]", nudge: "mt-0" },
  { icon: "calendar", box: "64 0 1664 1792", size: "h-[32px] w-[30px]", label: "27 Jul 2017", cell: "w-[252px]", text: "ml-[16px]", nudge: "mt-0" },
  { icon: "eye", box: "0 384 1792 1152", size: "h-[21px] w-[32px]", label: "0", cell: "w-[108px]", text: "ml-[16px]", nudge: "mt-[2px]" },
  { icon: "share", box: "0 128 1792 1536", size: "h-[28px] w-[33px]", label: "0", cell: "w-[110px]", text: "ml-[15px]", nudge: "mt-0" },
  { icon: "star", box: "128 0 1536 1587", size: "h-[29px] w-[30px]", label: "0", cell: "w-[106px]", text: "ml-[15px]", nudge: "-mt-px" },
  { icon: "marker", box: "384 128 1024 1536", size: "h-[27px] w-[18px]", label: "Create a Map", cell: "", text: "ml-[16px]", nudge: "mt-0" },
];

function CartButton() {
  return (
    <button className="absolute right-[30px] top-0 flex h-[50px] w-[58px] items-center justify-center rounded-[7px] border-2 border-[#ccc] bg-white pt-[6px]">
      <Cart />
    </button>
  );
}

function NavItem({ label, className }: { label: string; className: string }) {
  return (
    <a className={"flex items-center font-bold " + className}>
      <span className="-mt-px leading-[44px]">{label}</span>
      <Angle className="ml-[22px] mt-[2px]" />
    </a>
  );
}

export default function App() {
  return (
    <div className="h-[1262px] w-[2398px] overflow-hidden bg-white font-['Lato',sans-serif] text-[32px] leading-[44px] text-[#333] [font-variant-ligatures:none]">
      <header className="flex h-[142px] items-center bg-[#333] text-white">
        <div className="-mt-[4px] ml-[30px] w-[417px]">
          <Logo />
        </div>
        <NavItem label="Data" className="w-[176px]" />
        <NavItem label="Maps" className="w-[186px]" />
        <NavItem label="About" className="" />
        <div className="ml-auto -mt-[2px] flex h-[60px] w-[236px] items-center rounded-[8px] bg-white pl-[18px]">
          <Icon name="search" box="64 128 1664 1664" className="h-[29px] w-[29px] text-[#444]" />
          <span className="ml-[26px] mt-[3px] text-[#777]">Search</span>
        </div>
        <svg viewBox="0 0 84 84" className="ml-[52px] mt-[6px] h-[84px] w-[84px] shrink-0">
          <circle cx="42" cy="42" r="42" fill="#0a76b9" />
          <g fill="none" stroke="#1c5f8f" strokeOpacity=".5" strokeWidth="13" strokeLinecap="round" transform="translate(0 1.500)">
            <path d="M26 24A24.500 24.500 0 1 0 42 17.500V39" />
          </g>
          <g fill="none" stroke="#fbfafc" strokeWidth="12" strokeLinecap="round" strokeLinejoin="round">
            <path d="M25.500 24.500A24.300 24.300 0 1 0 42 18V38" />
          </g>
        </svg>
        <NavItem label="admin" className="ml-[26px] mr-[75px]" />
      </header>

      <main className="ml-[46px] w-[2280px]">
        <div className="flex h-[202px] items-start justify-between border-b-2 border-[#eee]">
          <h1 className="mt-[80px] text-[69px] font-bold leading-[84px]">Explore Layers</h1>
          <button className="mt-[84px] h-[72px] w-[250px] rounded-[8px] border-2 border-[#265a88] bg-[#2c689c] text-white">Upload Layers</button>
        </div>

        <div className="mt-[44px] flex items-start">
          <aside className="w-[526px] shrink-0">
            <section className="h-[260px] overflow-hidden rounded-[8px] border-2 border-[#ddd] shadow-[0_2px_2px_rgba(0,0,0,0.05)]">
              <div className="h-[86px] border-b-2 border-[#ddd] bg-[#f5f5f5] px-[30px] py-[20px]">Cart</div>
              <p className="px-[30px] pt-[30px] tracking-[-0.1px]">Add resources through the "Add to cart" buttons.</p>
            </section>

            <div className="mt-[44px] flex h-[72px] w-[524px] text-[#7a7a7a]">
              <button className="w-[262px] whitespace-nowrap rounded-l-[8px] border-2 border-[#ddd] pl-[24px] text-left">Set permissions</button>
              <button className="w-[262px] whitespace-nowrap rounded-r-[8px] border-2 border-[#ddd]">Create a Map</button>
            </div>

            <div className="mt-[32px] flex h-[44px] w-[524px] justify-between">
              <span>Filters</span>
              <a className="text-[#2c689c]">Clear</a>
            </div>

            <div className="mt-[22px] flex h-[70px] items-center rounded-[7px] bg-[#555] pl-[17px] text-[29px] font-light text-white">
              <svg viewBox="0 0 26 17" className="mt-[6px] h-[17px] w-[26px]" fill="none" stroke="#fff" strokeWidth="6">
                <path d="M2.300 2.300 13 12.800 23.700 2.300" />
              </svg>
              <span className="ml-[17px]">TEXT</span>
            </div>

            <div className="mt-[22px] flex h-[72px] w-[524px]">
              <div className="w-[426px] rounded-l-[8px] border-2 border-r-0 border-[#ccc] pl-[24px] pt-[14px] text-[#999] shadow-[inset_0_2px_2px_rgba(0,0,0,0.075)]">Search by text</div>
              <button className="w-[98px] rounded-r-[8px] border-2 border-[#265a88] bg-[#2c689c] pl-[24px] pt-px text-white">
                <Icon name="search" box="64 128 1664 1664" className="h-[30px] w-[30px]" />
              </button>
            </div>

            <div className="mt-[22px] flex h-[70px] items-center rounded-[7px] bg-[#555] pl-[17px] text-[29px] font-light text-white">
              <svg viewBox="0 0 17 26" className="h-[26px] w-[17px]" fill="none" stroke="#fff" strokeWidth="6">
                <path d="M2.300 2.300 12.800 13 2.300 23.700" />
              </svg>
              <span className="ml-[24px]">KEYWORDS</span>
            </div>

            <ul className="mt-[22px] h-[200px] rounded-t-[8px] border-2 border-[#ddd]">
              <li className="h-[86px] border-b-2 border-[#ddd] pl-[73px] pt-[20px]">FOSS4G2017</li>
              <li className="h-[86px] border-b-2 border-[#ddd] pl-[73px] pt-[20px]">boston</li>
            </ul>
          </aside>

          <section className="ml-[88px] flex-1">
            <div className="flex h-[164px] items-start justify-between">
              <span>Total: 7</span>
              <button className="flex h-[72px] w-[138px] items-center border-2 border-[#ccc] pl-[24px]">
                <Icon name="clock" box="128 128 1536 1536" className="h-[28px] w-[28px]" />
                <svg viewBox="0 0 19 26" className="ml-[6px] h-[26px] w-[19px]" fill="#333">
                  <path d="M0.500 0.500H14V17H18.500L12 25.500 5 17H9.300V5H4Z" />
                </svg>
                <Angle className="ml-[7px] mt-[2px]" />
              </button>
            </div>

            <article className="relative ml-[4px] flex h-[410px] w-[1630px] border-2 border-[#eee]">
              <CollegesMap />
              <div className="flex-1">
                <div className="h-[166px] border-b-2 border-[#eee] pl-[29px] pt-[33px]">
                  <h3 className="text-[40px] font-bold text-[#2c689c]">collegesuniversities_buffer</h3>
                  <p className="mt-[21px]">No abstract provided</p>
                </div>
                <div className="mt-[16px] flex h-[44px] items-center pl-[25px] text-[#555]">
                  {META.map((m) => (
                    <div key={m.icon} className={"flex shrink-0 items-center " + m.cell}>
                      <Icon name={m.icon} box={m.box} className={m.size + " " + m.nudge} />
                      <span className={"-mt-px whitespace-nowrap " + m.text}>{m.label}</span>
                    </div>
                  ))}
                </div>
              </div>
              <CartButton />
            </article>

            <article className="relative ml-[4px] mt-[64px] flex h-[410px] w-[1630px] border-2 border-[#eee]">
              <DistrictsMap />
              <div className="flex-1 pl-[29px] pt-[40px]">
                <p className="text-[24px] leading-[34px]">PLANNING CADASTRE</p>
                <h3 className="mt-[25px] text-[40px] font-bold text-[#2c689c]">Boston Planning Districts (BRA)</h3>
                <p className="mt-[21px] tracking-[-0.14px]">Planning Districts in Boston, as determined by the Boston Redevelopment Authority (BRA)</p>
              </div>
              <CartButton />
            </article>
          </section>
        </div>
      </main>
    </div>
  );
}
